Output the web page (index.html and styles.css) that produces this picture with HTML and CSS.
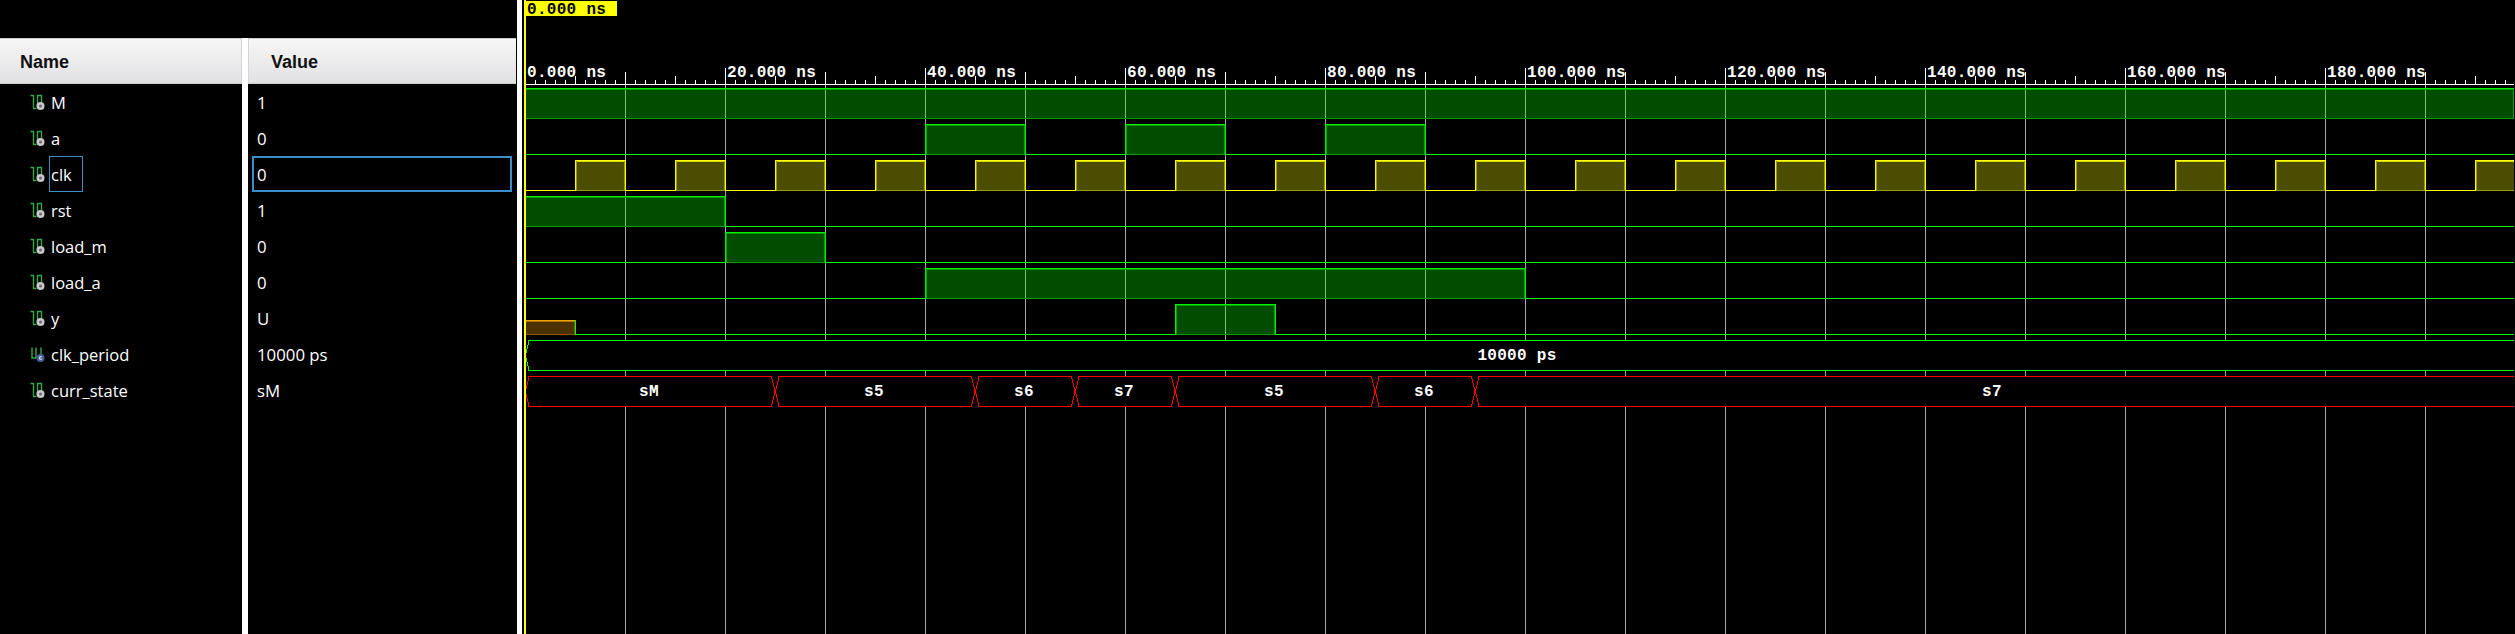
FILE: index.html
```html
<!DOCTYPE html>
<html lang="en">
<head>
<meta charset="utf-8">
<title>Waveform</title>
<link rel="stylesheet" href="styles.css">
</head>
<body>
<svg width="0" height="0" class="defs">
  <defs>
    <symbol id="icon-logic" viewBox="0 0 16 16">
      <path class="ic-g" d="M0.5 1.5H3.5V14.5H6.5M7.5 13V1.5H11.5V8"/>
      <circle class="ic-c" cx="10.5" cy="12" r="4"/>
      <circle class="ic-d" cx="10.5" cy="12" r="1.5"/>
    </symbol>
    <symbol id="icon-const" viewBox="0 0 16 16">
      <path class="ic-g" d="M2 1.5V12H6V1.5M11 1.5V8"/>
      <circle class="ic-b" cx="10.5" cy="12" r="4"/>
      <path class="ic-w" d="M12 10.8H9.6V13.2H12"/>
    </symbol>
  </defs>
</svg>
<div class="panel names">
  <div class="head head-name">Name</div>
  <div class="row"><svg class="icon"><use href="#icon-logic"/></svg><span class="label">M</span></div>
  <div class="row"><svg class="icon"><use href="#icon-logic"/></svg><span class="label">a</span></div>
  <div class="row"><svg class="icon"><use href="#icon-logic"/></svg><span class="label selected">clk</span></div>
  <div class="row"><svg class="icon"><use href="#icon-logic"/></svg><span class="label">rst</span></div>
  <div class="row"><svg class="icon"><use href="#icon-logic"/></svg><span class="label">load_m</span></div>
  <div class="row"><svg class="icon"><use href="#icon-logic"/></svg><span class="label">load_a</span></div>
  <div class="row"><svg class="icon"><use href="#icon-logic"/></svg><span class="label">y</span></div>
  <div class="row"><svg class="icon"><use href="#icon-const"/></svg><span class="label">clk_period</span></div>
  <div class="row"><svg class="icon"><use href="#icon-logic"/></svg><span class="label">curr_state</span></div>
</div>
<div class="split split-low"></div>
<div class="panel values">
  <div class="head head-value">Value</div>
  <div class="vrow">1</div>
  <div class="vrow">0</div>
  <div class="vrow vselected">0</div>
  <div class="vrow">1</div>
  <div class="vrow">0</div>
  <div class="vrow">0</div>
  <div class="vrow">U</div>
  <div class="vrow">10000 ps</div>
  <div class="vrow">sM</div>
</div>
<div class="split split-full"></div>
<svg class="wave" viewBox="522 0 1993 634" width="1993" height="634">
  <defs>
    <pattern id="p-grid" patternUnits="userSpaceOnUse" x="625" y="0" width="100" height="634"><rect class="grid" x="0" y="72" width="1" height="562"/></pattern>
    <pattern id="p-t10" patternUnits="userSpaceOnUse" x="525" y="0" width="10" height="634"><rect class="white" x="0" y="80" width="1" height="4"/></pattern>
    <pattern id="p-t50" patternUnits="userSpaceOnUse" x="525" y="0" width="50" height="634"><rect class="white" x="0" y="76" width="1" height="8"/></pattern>
    <pattern id="p-t100" patternUnits="userSpaceOnUse" x="525" y="0" width="100" height="634"><rect class="white" x="0" y="72" width="1" height="12"/></pattern>
    <pattern id="p-t200" patternUnits="userSpaceOnUse" x="525" y="0" width="200" height="634"><rect class="white" x="0" y="68" width="1" height="16"/></pattern>
    <pattern id="p-clk" patternUnits="userSpaceOnUse" x="575" y="0" width="100" height="634">
      <rect class="clk-fill" x="0" y="160" width="51" height="30"/>
      <rect class="clk-line" x="0" y="160" width="51" height="1"/>
      <rect class="clk-line2" x="0" y="161" width="51" height="1"/>
      <rect class="clk-line" x="0" y="160" width="1" height="31"/>
      <rect class="clk-dim" x="1" y="161" width="1" height="30"/>
      <rect class="clk-dim" x="49" y="161" width="1" height="30"/>
      <rect class="clk-line" x="50" y="160" width="1" height="31"/>
      <rect class="clk-dim" x="2" y="190" width="47" height="1"/>
      <rect class="clk-line" x="51" y="190" width="49" height="1"/>
    </pattern>
  </defs>

  <rect x="525" y="0" width="1990" height="634" fill="url(#p-grid)"/>

  <rect class="white" x="526" y="84" width="1988" height="1"/>
  <rect x="525" y="0" width="1990" height="84" fill="url(#p-t10)"/>
  <rect x="525" y="0" width="1990" height="84" fill="url(#p-t50)"/>
  <rect x="525" y="0" width="1990" height="84" fill="url(#p-t100)"/>
  <rect x="525" y="0" width="1990" height="84" fill="url(#p-t200)"/>

  <g class="ruler-text">
    <text x="527" y="77">0.000 ns</text>
    <text x="727" y="77">20.000 ns</text>
    <text x="927" y="77">40.000 ns</text>
    <text x="1127" y="77">60.000 ns</text>
    <text x="1327" y="77">80.000 ns</text>
    <text x="1527" y="77">100.000 ns</text>
    <text x="1727" y="77">120.000 ns</text>
    <text x="1927" y="77">140.000 ns</text>
    <text x="2127" y="77">160.000 ns</text>
    <text x="2327" y="77">180.000 ns</text>
  </g>

  <!-- baselines -->
  <path class="lime" d="M526 154.5H2514M526 226.5H2514M526 262.5H2514M526 298.5H2514M526 334.5H2514"/>

  <!-- M -->
  <rect class="hi" x="526" y="88" width="1988" height="30"/>
  <path class="lime2" d="M526 88.5H2514"/>
  <path class="dim2" d="M526 89.5H2513M526 118.5H2513.5V90"/>

  <!-- a -->
  <rect class="hi" x="925" y="124" width="101" height="30"/>
  <path class="lime2" d="M925.5 154V124.5H1025.5V154"/>
  <path class="dim2" d="M926.5 154V125.5H1024.5V154M926 154.5H1025"/>
  <rect class="hi" x="1125" y="124" width="101" height="30"/>
  <path class="lime2" d="M1125.5 154V124.5H1225.5V154"/>
  <path class="dim2" d="M1126.5 154V125.5H1224.5V154M1126 154.5H1225"/>
  <rect class="hi" x="1325" y="124" width="101" height="30"/>
  <path class="lime2" d="M1325.5 154V124.5H1425.5V154"/>
  <path class="dim2" d="M1326.5 154V125.5H1424.5V154M1326 154.5H1425"/>

  <!-- clk -->
  <rect x="526" y="155" width="1988" height="37" fill="url(#p-clk)"/>

  <!-- rst -->
  <rect class="hi" x="526" y="196" width="200" height="30"/>
  <path class="lime2" d="M526 196.5H725.5V226"/>
  <path class="dim2" d="M526 197.5H724.5V226M526 226.5H725"/>

  <!-- load_m -->
  <rect class="hi" x="725" y="232" width="101" height="30"/>
  <path class="lime2" d="M725.5 262V232.5H825.5V262"/>
  <path class="dim2" d="M726.5 262V233.5H824.5V262M726 262.5H825"/>

  <!-- load_a -->
  <rect class="hi" x="925" y="268" width="601" height="30"/>
  <path class="lime2" d="M925.5 298V268.5H1525.5V298"/>
  <path class="dim2" d="M926.5 298V269.5H1524.5V298M926 298.5H1525"/>

  <!-- y -->
  <rect class="unk" x="526" y="320" width="49" height="14"/>
  <path class="unk-line" d="M526 320.5H575"/>
  <path class="unk-line2" d="M526 321.5H575"/>
  <path class="unk-dim" d="M526 334.5H575M574.5 321V334"/>
  <path class="lime" d="M575.5 320V334"/>
  <rect class="hi" x="1175" y="304" width="101" height="30"/>
  <path class="lime2" d="M1175.5 334V304.5H1275.5V334"/>
  <path class="dim2" d="M1176.5 334V305.5H1274.5V334M1176 334.5H1275"/>

  <!-- clk_period -->
  <path class="bus-g" d="M2514 340.5H529L525.5 355.5L529 370.5H2514"/>
  <text class="bus-text" x="1517" y="360">10000 ps</text>

  <!-- curr_state -->
  <path class="bus-r" d="M529 376.5H771.5L775 391.5L771.5 406.5H529L525.5 391.5Z"/>
  <path class="bus-r" d="M779 376.5H971.5L975 391.5L971.5 406.5H779L775.5 391.5Z"/>
  <path class="bus-r" d="M979 376.5H1071.5L1075 391.5L1071.5 406.5H979L975.5 391.5Z"/>
  <path class="bus-r" d="M1079 376.5H1171.5L1175 391.5L1171.5 406.5H1079L1075.5 391.5Z"/>
  <path class="bus-r" d="M1179 376.5H1371.5L1375 391.5L1371.5 406.5H1179L1175.5 391.5Z"/>
  <path class="bus-r" d="M1379 376.5H1471.5L1475 391.5L1471.5 406.5H1379L1375.5 391.5Z"/>
  <path class="bus-r" d="M2514 376.5H1479L1475.5 391.5L1479 406.5H2514"/>
  <g class="bus-labels">
    <text x="649" y="396">sM</text>
    <text x="874" y="396">s5</text>
    <text x="1024" y="396">s6</text>
    <text x="1124" y="396">s7</text>
    <text x="1274" y="396">s5</text>
    <text x="1424" y="396">s6</text>
    <text x="1992" y="396">s7</text>
  </g>

  <!-- cursor -->
  <rect class="cursor" x="524" y="0" width="2" height="634"/>
  <rect class="cursor" x="525" y="1" width="92" height="15"/>
  <text class="cursor-text" x="527" y="14">0.000 ns</text>
</svg>
</body>
</html>
```

FILE: styles.css
```css
* { box-sizing: border-box; }
html, body { margin: 0; padding: 0; height: 634px; overflow: hidden; background: #000; }
body { display: flex; width: 2515px; font-family: "Open Sans", "Noto Sans", sans-serif; color: #fff; }
.defs { position: absolute; }

.panel { display: flex; flex-direction: column; padding-top: 38px; flex: none; }
.names { width: 242px; }
.values { width: 269px; }

.head {
  height: 46px;
  flex: none;
  display: flex;
  align-items: center;
  padding-top: 3px;
  font-family: "Liberation Sans", Arial, sans-serif;
  font-weight: 700;
  font-size: 18px;
  color: #111;
  background: linear-gradient(#f6f6f6, #e2e2e5);
  border-top: 1px solid #cacaca;
  border-bottom: 1px solid #cacaca;
}
.head-name { padding-left: 20px; border-right: 1px solid #d4d4d4; }
.head-value { padding-left: 22px; border-left: 1px solid #d4d4d4; margin-right: 1px; }

.row { height: 36px; flex: none; display: flex; align-items: flex-start; padding-left: 30px; font-size: 16.5px; }
.icon { width: 16px; height: 16px; margin-top: 10px; flex: none; }
.label { height: 36px; margin-left: 3px; padding: 6px 10px 0 1px; border: 1px solid transparent; line-height: 24px; white-space: nowrap; }
.selected { border-color: #3b8fc9; }

.vrow { height: 36px; flex: none; padding: 7px 0 0 9px; font-size: 16.8px; line-height: 24px; }
.vselected { margin: 0 5px 0 4px; padding: 5px 0 0 3px; border: 2px solid #3b8fc9; }

.split { background: #fff; flex: none; }
.split-low { width: 6px; margin-top: 38px; }
.split-full { width: 5px; }

.wave { display: block; flex: none; shape-rendering: crispEdges; }

.ic-g { fill: none; stroke: #2fa84a; stroke-width: 1.4; }
.ic-c { fill: #c8c8c8; }
.ic-d { fill: #6a6a6a; }
.ic-b { fill: #44609c; }
.ic-w { fill: none; stroke: #e8e8e8; stroke-width: 1; }

.grid { fill: #a8a8a8; }
.white { fill: #fff; }

.ruler-text text, .bus-text, .bus-labels text, .cursor-text {
  font-family: "Liberation Mono", "Courier New", monospace;
  font-weight: 700;
  font-size: 16px;
  letter-spacing: 0.3px;
}
.ruler-text text { fill: #fff; }
.bus-text { fill: #fff; text-anchor: middle; }
.bus-labels text { fill: #fff; text-anchor: middle; }
.cursor-text { fill: #000; }
.cursor { fill: #ffff00; }

.lime { fill: none; stroke: #00ff00; stroke-width: 1; }
.lime2 { fill: none; stroke: #00ee00; stroke-width: 1; }
.dim2 { fill: none; stroke: #00a000; stroke-width: 1; }
.hi { fill: #00ff00; fill-opacity: 0.3; }

.clk-fill { fill: #ffff00; fill-opacity: 0.3; }
.clk-line { fill: #ffff00; }
.clk-line2 { fill: #d8d800; }
.clk-dim { fill: #999900; }

.unk { fill: #ff9f00; fill-opacity: 0.3; }
.unk-line { fill: none; stroke: #f0a000; stroke-width: 1; }
.unk-line2 { fill: none; stroke: #b07000; stroke-width: 1; }
.unk-dim { fill: none; stroke: #8a5a00; stroke-width: 1; }

.bus-g { fill: #000; stroke: #00ff00; stroke-width: 1; }
.bus-r { fill: #000; stroke: #ff0000; stroke-width: 1; }
```
